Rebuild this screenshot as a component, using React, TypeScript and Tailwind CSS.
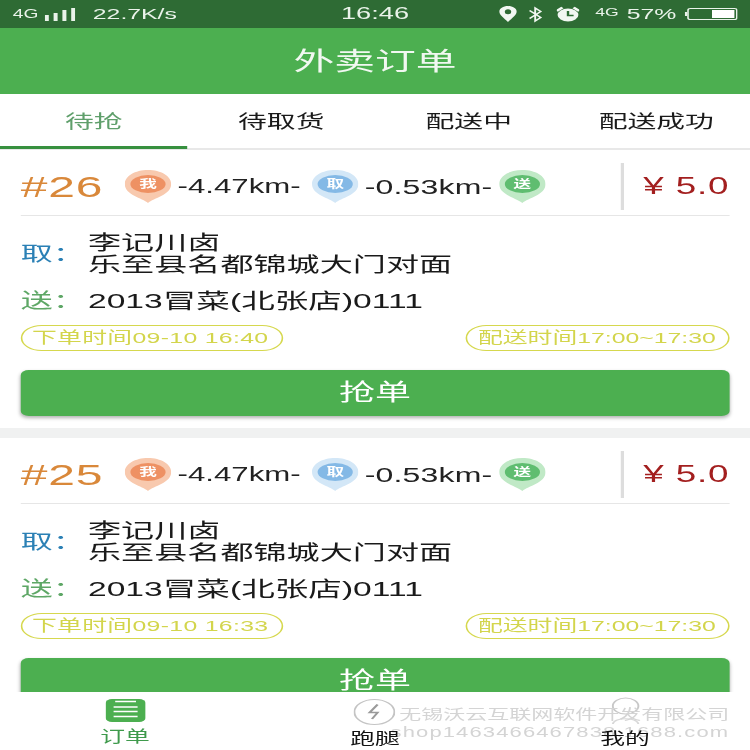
const FONT = '"Liberation Sans","Noto Sans CJK SC",sans-serif';

function Pin({ label, outer, inner }: { label: string; outer: string; inner: string }) {
  return (
    <span className="relative inline-block w-[29px] h-[34px] shrink-0">
      <svg width="29" height="34" viewBox="0 0 29 34" className="block">
        <path d="M14.5 33 C11 28 0 25 0 14 C0 6 6.500 0 14.500 0 C22.500 0 29 6 29 14 C29 25 18 28 14.500 33Z" fill={outer} />
        <ellipse cx="14.500" cy="14" rx="11" ry="9" fill={inner} />
      </svg>
      <span className="absolute left-0 top-[6px] w-[29px] text-center text-[11px] leading-[16px] font-bold text-white">{label}</span>
    </span>
  );
}

function Order({ no, time }: { no: string; time: string }) {
  return (
    <div className="bg-white h-[278px] px-[13px] shrink-0">
      <div className="flex items-center h-[66px] pt-[8px] border-b border-[#e6e6e6]">
        <div className="w-[65px] text-[30px] text-[#d9883a] tracking-[0.5px] leading-none">{no}</div>
        <Pin label="我" outer="#f8c9ae" inner="#ee9163" />
        <span className="ml-[4px] w-[84px] text-[19.5px] text-[#222] whitespace-nowrap">-4.47km-</span>
        <Pin label="取" outer="#d3e7f7" inner="#84b9e6" />
        <span className="ml-[4px] w-[84px] text-[20px] text-[#222] tracking-[0.1px] whitespace-nowrap">-0.53km-</span>
        <Pin label="送" outer="#c0e9c6" inner="#5fbd70" />
        <div className="ml-auto h-[47px] w-[1.5px] bg-[#dddddd]" />
        <div className="w-[66px] text-right text-[23px] text-[#a31f1f] tracking-[0.5px] whitespace-nowrap">¥ 5.0</div>
      </div>
      <div className="flex items-center mt-[16px]">
        <span className="w-[42px] text-[20px] text-[#2b80b5]">取：</span>
        <div className="text-[20.7px] leading-[22px] text-[#1a1a1a]">
          <div>李记川卤</div>
          <div>乐至县名都锦城大门对面</div>
        </div>
      </div>
      <div className="flex items-center mt-[12px] h-[26px]">
        <span className="w-[42px] text-[20px] text-[#5ea766]">送：</span>
        <span className="text-[21px] text-[#1a1a1a]">2013冒菜(北张店)0111</span>
      </div>
      <div className="flex justify-between mt-[11px]">
        <span className="h-[26px] w-[164px] pl-[6px] rounded-full border border-[#d6d84e] text-[15.5px] tracking-[0.2px] leading-[24px] text-[#d3d54c] whitespace-nowrap">下单时间{time}</span>
        <span className="h-[26px] w-[165px] pl-[7px] rounded-full border border-[#d6d84e] text-[15.5px] leading-[24px] text-[#d3d54c] whitespace-nowrap">配送时间17:00~17:30</span>
      </div>
      <button className="block w-full h-[46px] mt-[19px] rounded-[5px] bg-[#4caf50] text-white text-[22.5px] shadow-[0_2px_3px_rgba(0,0,0,0.3)]">抢单</button>
    </div>
  );
}

export default function App() {
  return (
    <div className="w-[750px] h-[750px] overflow-hidden bg-white">
      <div
        className="w-[468.75px] h-[750px] origin-top-left scale-x-[1.6] flex flex-col overflow-hidden blur-[0.4px]"
        style={{ fontFamily: FONT }}
      >
        <div className="h-[28px] shrink-0 bg-[#2e6b34] text-[#eaf3ea] grid grid-cols-[1fr_auto_1fr] items-center px-[8px]">
          <div className="flex items-center">
            <span className="text-[12px] w-[20px]">4G</span>
            <svg width="19" height="13" viewBox="0 0 19 13">
              <rect x="0" y="7" width="2.500" height="6" fill="#eaf3ea" />
              <rect x="5.500" y="5" width="2.500" height="8" fill="#eaf3ea" />
              <rect x="11" y="2" width="2.500" height="11" fill="#eaf3ea" />
              <rect x="16.500" y="0" width="2.500" height="13" fill="#eaf3ea" />
            </svg>
            <span className="ml-[11px] text-[15.5px]">22.7K/s</span>
          </div>
          <span className="text-[17px]">16:46</span>
          <div className="flex items-center justify-end">
            <svg width="11" height="17" viewBox="0 0 11 17">
              <path d="M5.500 16 C3 12 0 9 0 5.500 C0 2.500 2.500 0 5.500 0 C8.500 0 11 2.500 11 5.500 C11 9 8 12 5.500 16Z" fill="#f2f7f2" />
              <ellipse cx="5.500" cy="5.800" rx="2" ry="2.500" fill="#2e6b34" />
            </svg>
            <svg width="9" height="17" viewBox="0 0 9 17" className="ml-[7px]">
              <path d="M1 4.500 L8 11.500 L4.500 15 V2 L8 5.500 L1 12.500" fill="none" stroke="#f2f7f2" strokeWidth="1.2" />
            </svg>
            <svg width="14" height="17" viewBox="0 0 14 17" className="ml-[9px]">
              <circle cx="7" cy="9" r="6.500" fill="#f2f7f2" />
              <path d="M7 5 V9.500 H10.500" fill="none" stroke="#2e6b34" strokeWidth="1.500" />
              <path d="M0 5 L3.500 1.500 M14 5 L10.500 1.500" stroke="#f2f7f2" strokeWidth="2" />
            </svg>
            <span className="ml-[10px] text-[11px] -mt-[3px]">4G</span>
            <span className="ml-[5px] text-[15.5px]">57%</span>
            <svg width="33" height="12" viewBox="0 0 33 12" className="ml-[5px]">
              <rect x="0" y="4" width="1.500" height="4" fill="#eaf3ea" />
              <rect x="2" y="0.500" width="30.500" height="11" rx="1.500" fill="none" stroke="#eaf3ea" />
              <rect x="17" y="2" width="14" height="8" fill="#ffffff" />
            </svg>
          </div>
        </div>

        <div className="h-[66px] shrink-0 bg-[#4caf50] flex items-center justify-center text-[25.5px] text-[#f1f8f1]">外卖订单</div>

        <div className="h-[56px] shrink-0 grid grid-cols-4 border-b-2 border-[#e8e8e8] bg-white text-[18px] text-[#1a1a1a]">
          <div className="relative flex items-center justify-center pt-[3px] text-[#5f9f6b]">
            待抢
            <span className="absolute left-0 right-0 -bottom-[1px] h-[3px] bg-[#37903f]" />
          </div>
          <div className="flex items-center justify-center pt-[3px]">待取货</div>
          <div className="flex items-center justify-center pt-[3px]">配送中</div>
          <div className="flex items-center justify-center pt-[3px]">配送成功</div>
        </div>

        <div className="flex-1 min-h-0 overflow-hidden bg-[#f0f1f1] flex flex-col gap-[10px]">
          <Order no="#26" time="09-10 16:40" />
          <Order no="#25" time="09-10 16:33" />
        </div>

        <div className="relative h-[58px] shrink-0 bg-white grid grid-cols-3 text-[15.500px] text-[#111]">
          <div className="flex flex-col items-center pt-[7px]">
            <svg width="25" height="23" viewBox="0 0 25 23">
              <rect x="0" y="0" width="25" height="23" rx="4" fill="#4caf50" />
              <path d="M6 2.500 H19 M5 8 H20 M5 12.500 H20 M5 17.500 H20" stroke="#ffffff" strokeWidth="1.300" />
            </svg>
            <span className="mt-[5px] leading-[20px] text-[#3f9a4c]">订单</span>
          </div>
          <div className="flex flex-col items-center pt-[5px]">
            <svg width="26" height="30" viewBox="0 0 26 30">
              <circle cx="13" cy="15" r="12.500" fill="none" stroke="#c4c4c4" strokeWidth="1.200" />
              <path d="M15 7.500 L10 15.500 H15 L11.500 22" fill="none" stroke="#9a9a9a" strokeWidth="1.500" />
            </svg>
            <span className="relative z-10 mt-[2px] leading-[20px]">跑腿</span>
          </div>
          <div className="flex flex-col items-center pt-[5px]">
            <svg width="18" height="30" viewBox="0 0 18 30">
              <circle cx="9" cy="9" r="8" fill="none" stroke="#c8c8c8" strokeWidth="1.200" />
              <path d="M1 27 C2 20 16 20 17 27" fill="none" stroke="#d8d8d8" strokeWidth="1.200" />
            </svg>
            <span className="relative z-10 mt-[2px] leading-[20px]">我的</span>
          </div>
          <div className="absolute right-[13px] top-[14px] text-right text-[13.750px] leading-[18px] text-[#d4d4d4] whitespace-nowrap">
            <div>无锡沃云互联网软件开发有限公司</div>
            <div className="tracking-[0.7px]">shop1463466467838.1688.com</div>
          </div>
        </div>
      </div>
    </div>
  );
}
